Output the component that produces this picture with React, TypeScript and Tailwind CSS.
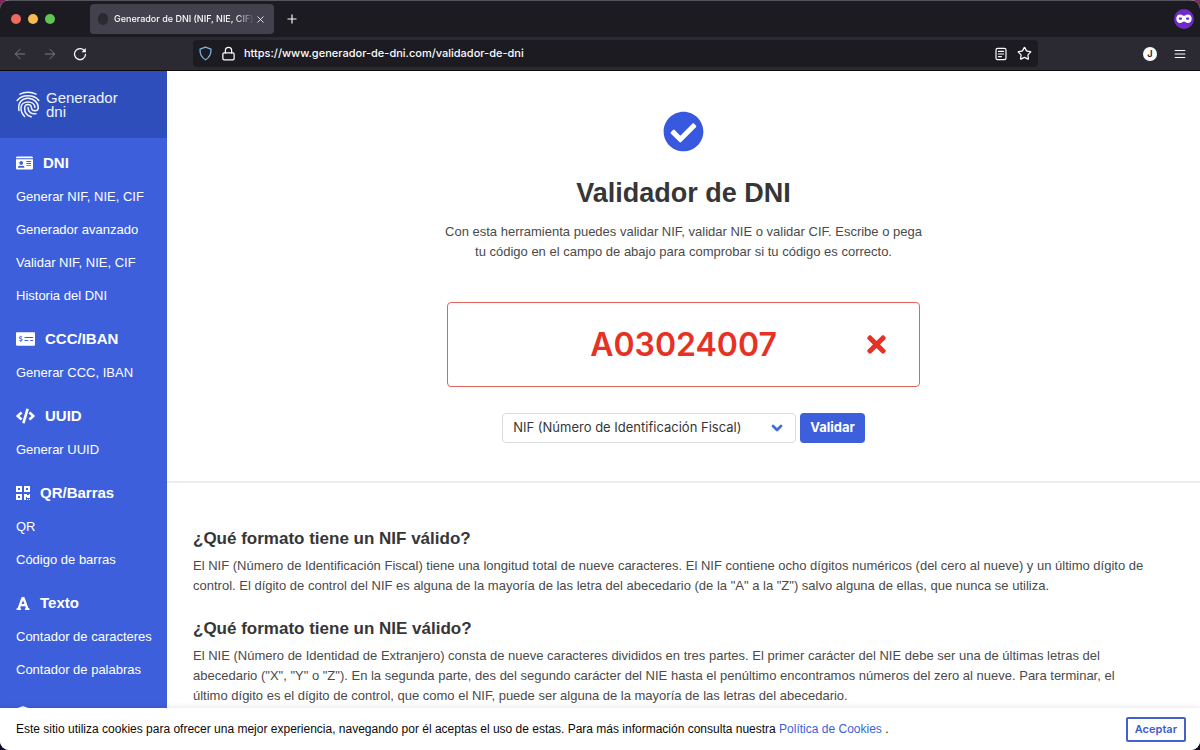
import React from "react";
import {
  FaCheckCircle,
  FaCode,
  FaCube,
  FaFont,
  FaIdCard,
  FaMoneyCheckAlt,
  FaQrcode,
  FaTimes,
} from "react-icons/fa";
import { ArrowLeft, ArrowRight, ChevronDown, Lock, Plus, Star, X } from "lucide-react";

type Section = { title: string; icon: React.ReactNode; links: string[] };

const sections: Section[] = [
  {
    title: "DNI",
    icon: <FaIdCard className="h-4 w-[17px]" />,
    links: ["Generar NIF, NIE, CIF", "Generador avanzado", "Validar NIF, NIE, CIF", "Historia del DNI"],
  },
  { title: "CCC/IBAN", icon: <FaMoneyCheckAlt className="h-4 w-[19px]" />, links: ["Generar CCC, IBAN"] },
  { title: "UUID", icon: <FaCode className="h-4 w-[19px]" />, links: ["Generar UUID"] },
  { title: "QR/Barras", icon: <FaQrcode className="h-4 w-[14px]" />, links: ["QR", "Código de barras"] },
  {
    title: "Texto",
    icon: <FaFont className="h-[15px] w-[14px]" />,
    links: ["Contador de caracteres", "Contador de palabras"],
  },
  { title: "Conversor", icon: <FaCube className="h-4 w-[14px]" />, links: [] },
];

function FingerprintLogo() {
  return (
    <svg viewBox="0 0 24 28" className="h-7 w-6" fill="none" stroke="currentColor" strokeWidth="1.5" strokeLinecap="round">
      <path d="M4 3.200C8.500 .6 15.500 .6 20 3.200" />
      <path d="M1.200 9.500C5.500 3 18.500 3 22.800 9.500" />
      <path d="M3 19.500C1.500 12 6 7.300 12 7.300s10.300 4.400 10.300 9.200c0 4.200-6.600 4.300-6.900 .2-.2-4.600-6.800-4.300-6.800 .5 0 4 2.600 7.500 6.600 8.600" />
      <path d="M8.600 25.500C5.500 22.500 4.900 19.500 5 16.800 5.200 9 18.900 9.300 18.900 16.500" />
      <path d="M12 16.500c0 4.500 3.500 7 8 6.200" />
    </svg>
  );
}

function ReloadIcon() {
  return (
    <svg viewBox="0 0 16 16" className="size-[14px]" fill="none" stroke="currentColor" strokeWidth="1.5" strokeLinecap="round">
      <path d="M13.6 5.2A6.3 6.3 0 1 0 14.3 8.6" />
      <path d="M14.6 1.2v4.9H9.7z" fill="currentColor" stroke="none" />
    </svg>
  );
}

function ShieldIcon() {
  return (
    <svg viewBox="0 0 14 16" className="h-[15px] w-[13px] text-[#7fb4e0]" fill="none" stroke="currentColor" strokeWidth="1.4" strokeLinejoin="round">
      <path d="M7 1.200 12.900 3.300C13.100 8.200 11.300 12.400 7 14.700 2.700 12.400.9 8.200 1.100 3.300z" />
    </svg>
  );
}

function ReaderIcon() {
  return (
    <svg viewBox="0 0 12 14" className="h-[14px] w-3" fill="none" stroke="currentColor" strokeWidth="1.2" strokeLinecap="round">
      <rect x="1" y="1.4" width="10" height="11.2" rx="1.6" />
      <path d="M3.4 4.4h5.2M3.4 7h5.2M3.4 9.6h3" />
    </svg>
  );
}

function MenuIcon() {
  return (
    <svg viewBox="0 0 12 12" className="size-3" fill="none" stroke="currentColor" strokeWidth="1.2" strokeLinecap="round">
      <path d="M1.200 2.500h9.600M1.200 6h9.600M1.200 9.500h9.600" />
    </svg>
  );
}

function MaskIcon() {
  return (
    <svg viewBox="0 0 20 20" className="size-5">
      <circle cx="10" cy="10" r="10" fill="#6f2bc8" />
      <path
        d="M6.1 5.600c1.800 0 2.900 1.300 3.900 1.300s2.100-1.300 3.900-1.300c2.200 0 3.800 1.700 3.800 4.100s-1.600 4.300-3.800 4.300c-1.900 0-2.800-1.600-3.900-1.600s-2 1.600-3.900 1.600c-2.200 0-3.800-1.900-3.800-4.300s1.600-4.100 3.800-4.100z"
        fill="#fff"
      />
      <rect x="4.800" y="8.500" width="3.200" height="2.200" rx="1" fill="#6f2bc8" />
      <rect x="12" y="8.500" width="3.200" height="2.200" rx="1" fill="#6f2bc8" />
    </svg>
  );
}

function TabStrip() {
  return (
    <div className="flex h-[36px] items-center bg-[#1c1b22]">
      <div className="flex gap-[7px] pl-[11px]">
        <span className="size-[10px] rounded-full bg-[#ee6a5f]" />
        <span className="size-[10px] rounded-full bg-[#f5bd4f]" />
        <span className="size-[10px] rounded-full bg-[#61c454]" />
      </div>
      <div className="ml-[35px] flex h-[30px] w-[184px] items-center rounded bg-[#42414d] pr-2 pl-2 text-[#fbfbfe]">
        <span className="h-3 w-[10px] shrink-0 rounded-full bg-[#2b2a33]" />
        <span className="ml-[6px] min-w-0 flex-1 overflow-hidden text-[9px] font-medium whitespace-nowrap [mask-image:linear-gradient(to_left,transparent,black_20px)]">
          Generador de DNI (NIF, NIE, CIF)
        </span>
        <button aria-label="Cerrar pestaña">
          <X className="size-[11px]" strokeWidth={1.8} />
        </button>
      </div>
      <button aria-label="Nueva pestaña" className="ml-[11px] text-[#fbfbfe]">
        <Plus className="size-[14px]" strokeWidth={2} />
      </button>
      <span className="mr-[6px] ml-auto">
        <MaskIcon />
      </span>
    </div>
  );
}

function Toolbar() {
  return (
    <div className="flex h-[34px] items-center border-b border-[#0c0c0d] bg-[#2b2a33] text-[#fbfbfe]">
      <button aria-label="Atrás" className="ml-3 text-[#7b7a83]">
        <ArrowLeft className="size-4" strokeWidth={1.5} />
      </button>
      <button aria-label="Adelante" className="ml-[14px] text-[#7b7a83]">
        <ArrowRight className="size-4" strokeWidth={1.5} />
      </button>
      <button aria-label="Recargar" className="ml-[15px]">
        <ReloadIcon />
      </button>
      <div className="ml-[106px] flex h-[27px] flex-1 items-center rounded bg-[#1c1b22] px-[6px]">
        <ShieldIcon />
        <Lock className="ml-[9px] size-[15px]" strokeWidth={2} />
        <input
          aria-label="Dirección"
          className="ml-2 min-w-0 flex-1 bg-transparent text-[11px] font-medium outline-none"
          defaultValue="https://www.generador-de-dni.com/validador-de-dni"
        />
        <button aria-label="Vista de lectura">
          <ReaderIcon />
        </button>
        <button aria-label="Añadir marcador" className="ml-[10px]">
          <Star className="size-[15px]" strokeWidth={2} />
        </button>
      </div>
      <button
        aria-label="Cuenta"
        className="ml-[105px] flex size-[14px] items-center justify-center rounded-full bg-white text-[9px] font-bold text-[#2b2a33]"
      >
        J
      </button>
      <button aria-label="Menú" className="mr-[14px] ml-[17px]">
        <MenuIcon />
      </button>
    </div>
  );
}

function Sidebar() {
  return (
    <aside className="w-[167px] shrink-0 bg-[#3d5fdb] text-white">
      <a href="#" className="flex h-[67px] items-center gap-[6px] bg-[#2e4fbb] px-4 text-[#f0f3ff]">
        <FingerprintLogo />
        <span className="flex flex-col text-[15px] leading-[14px]">
          <span>Generador</span>
          <span>dni</span>
        </span>
      </a>
      <nav className="pt-2 pl-4 text-[13px]">
        {sections.map((section) => (
          <div key={section.title} className="mb-[10px]">
            <h2 className="flex h-[34px] items-center gap-[10px] text-[15px] font-bold">
              {section.icon}
              {section.title}
            </h2>
            {section.links.map((link) => (
              <a key={link} href="#" className="flex h-[33px] items-center whitespace-nowrap">
                {link}
              </a>
            ))}
          </div>
        ))}
      </nav>
    </aside>
  );
}

function Validator() {
  return (
    <section className="flex flex-col items-center border-b-2 border-[#ededed] px-7 pt-10 pb-[38px]">
      <FaCheckCircle className="size-[41px] text-[#3858df]" />
      <h1 className="mt-[25px] text-[27px] leading-8 font-bold text-[#363636]">Validador de DNI</h1>
      <p className="mt-[13px] text-center text-[13px] leading-5">
        Con esta herramienta puedes validar NIF, validar NIE o validar CIF. Escribe o pega
        <br />
        tu código en el campo de abajo para comprobar si tu código es correcto.
      </p>
      <form className="mt-10 flex flex-col items-center" onSubmit={(e) => e.preventDefault()}>
        <div className="relative">
          <input
            aria-label="Código"
            className="h-[85px] w-[473px] rounded border border-[#e2645c] text-center font-[Inter,sans-serif] text-[32px] font-semibold text-[#e63225] outline-none"
            defaultValue="A03024007"
          />
          <FaTimes className="absolute top-[29px] right-[30px] size-[27px] text-[#e63225]" />
        </div>
        <div className="mt-[26px] flex gap-1 font-[Inter,sans-serif]">
          <div className="relative">
            <select
              aria-label="Tipo de documento"
              className="h-[30px] w-[294px] appearance-none rounded border border-[#dbdbdb] bg-white px-[10px] text-[13px] text-[#363636]"
            >
              <option>NIF (Número de Identificación Fiscal)</option>
            </select>
            <ChevronDown className="pointer-events-none absolute top-[7px] right-[11px] size-4 text-[#3d6fdb]" strokeWidth={4} />
          </div>
          <button className="h-[30px] rounded bg-[#3d5fdb] px-[10px] text-[13px] font-bold text-white">Validar</button>
        </div>
      </form>
    </section>
  );
}

function Article() {
  return (
    <article className="px-[26px] pt-[43px] text-[13px] leading-5">
      <h3 className="text-[17px] leading-[26px] font-bold text-[#363636]">¿Qué formato tiene un NIF válido?</h3>
      <p className="mt-1">
        El NIF (Número de Identificación Fiscal) tiene una longitud total de nueve caracteres. El NIF contiene ocho
        dígitos numéricos (del cero al nueve) y un último dígito de
        <br />
        control. El dígito de control del NIF es alguna de la mayoría de las letra del abecedario (de la "A" a la "Z")
        salvo alguna de ellas, que nunca se utiliza.
      </p>
      <h3 className="mt-5 text-[17px] leading-[26px] font-bold text-[#363636]">¿Qué formato tiene un NIE válido?</h3>
      <p className="mt-1">
        El NIE (Número de Identidad de Extranjero) consta de nueve caracteres divididos en tres partes. El primer
        carácter del NIE debe ser una de últimas letras del
        <br />
        abecedario ("X", "Y" o "Z"). En la segunda parte, des del segundo carácter del NIE hasta el penúltimo
        encontramos números del zero al nueve. Para terminar, el
        <br />
        último dígito es el dígito de control, que como el NIF, puede ser alguna de la mayoría de las letras del
        abecedario.
      </p>
    </article>
  );
}

function CookieBar() {
  return (
    <footer className="relative flex h-[42px] shrink-0 items-center justify-between bg-white pr-[14px] pl-4 text-xs text-[#0a0a0a] shadow-[0_0_6px_rgba(0,0,0,0.12)]">
      <p>
        Este sitio utiliza cookies para ofrecer una mejor experiencia, navegando por él aceptas el uso de estas. Para
        más información consulta nuestra{" "}
        <a href="#" className="text-[#3d5fdb]">
          Política de Cookies
        </a>{" "}
        .
      </p>
      <button className="h-[25px] rounded-[2px] border-2 border-[#4361c8] px-[7px] font-[Inter,sans-serif] text-[11px] font-semibold text-[#3d5bd0]">
        Aceptar
      </button>
    </footer>
  );
}

export default function App() {
  return (
    <div className="h-screen bg-linear-to-b from-[#7a2a5c] to-[#150a26]">
      <div className="flex h-full flex-col overflow-hidden rounded-[9px] bg-white font-['Liberation_Sans',sans-serif] text-[#4a4a4a]">
        <header className="border-t border-[#55545c] font-[Inter,sans-serif]">
          <TabStrip />
          <Toolbar />
        </header>
        <div className="flex min-h-0 flex-1 overflow-hidden">
          <Sidebar />
          <main className="min-w-0 flex-1">
            <Validator />
            <Article />
          </main>
        </div>
        <CookieBar />
      </div>
    </div>
  );
}
